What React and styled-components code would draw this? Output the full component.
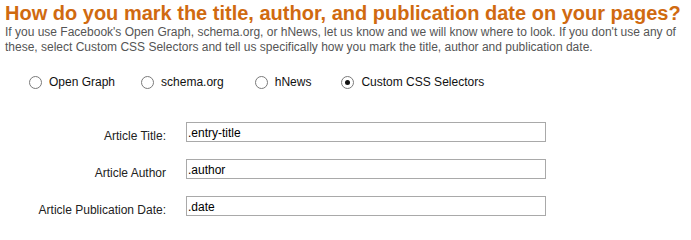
import React from "react";
import styled, { createGlobalStyle } from "styled-components";

const Global = createGlobalStyle`
  html, body { margin: 0; padding: 0; background: #fff; }
  body { font-family: "Liberation Sans", Arial, sans-serif; }
`;

const Page = styled.div`
  padding: 2px 5px 0 5px;
`;

const Title = styled.h1`
  margin: 0;
  font-size: 20px;
  line-height: 22px;
  font-weight: bold;
  color: #d06a10;
`;

const Desc = styled.p`
  margin: 1px 0 0 0;
  font-size: 12px;
  line-height: 15px;
  color: #555;
`;

const RadioRow = styled.div`
  display: flex;
  align-items: center;
  height: 20px;
  margin-top: 17px;
  padding-left: 24px;
`;

const RadioItem = styled.label`
  display: flex;
  align-items: center;
  gap: 7px;
  margin-right: ${(p) => p.$space}px;
  font-size: 12px;
  color: #111;
`;

const Circle = styled.span`
  box-sizing: border-box;
  width: 13px;
  height: 13px;
  border-radius: 50%;
  border: 1px solid #7a7a7a;
  background: #fff;
  display: flex;
  align-items: center;
  justify-content: center;
  &::after {
    content: "";
    width: 5px;
    height: 5px;
    border-radius: 50%;
    background: ${(p) => (p.$checked ? "#111" : "transparent")};
  }
`;

const Form = styled.div`
  display: grid;
  grid-template-columns: 161px 360px;
  grid-auto-rows: 20px;
  column-gap: 20px;
  row-gap: 17px;
  margin-top: 30px;
`;

const FieldLabel = styled.label`
  text-align: right;
  font-size: 12px;
  line-height: 15px;
  padding-top: 7px;
  color: #222;
`;

const TextInput = styled.input`
  box-sizing: border-box;
  width: 360px;
  height: 20px;
  margin: 0;
  padding: 1px 1px 0 1px;
  border: 1px solid #a9a9a9;
  font-family: "Liberation Sans", Arial, sans-serif;
  font-size: 12px;
  color: #000;
  outline: none;
`;

const options = [
  { label: "Open Graph", checked: false, space: 26 },
  { label: "schema.org", checked: false, space: 31 },
  { label: "hNews", checked: false, space: 30 },
  { label: "Custom CSS Selectors", checked: true, space: 0 },
];

const fields = [
  { label: "Article Title:", value: ".entry-title" },
  { label: "Article Author", value: ".author" },
  { label: "Article Publication Date:", value: ".date" },
];

export default function App() {
  return (
    <Page>
      <Global />
      <Title>How do you mark the title, author, and publication date on your pages?</Title>
      <Desc>
        If you use Facebook's Open Graph, schema.org, or hNews, let us know and we will know where to look. If you don't use any of
        these, select Custom CSS Selectors and tell us specifically how you mark the title, author and publication date.
      </Desc>
      <RadioRow>
        {options.map((o) => (
          <RadioItem key={o.label} $space={o.space}>
            <Circle $checked={o.checked} />
            {o.label}
          </RadioItem>
        ))}
      </RadioRow>
      <Form>
        {fields.map((f) => (
          <React.Fragment key={f.label}>
            <FieldLabel>{f.label}</FieldLabel>
            <TextInput defaultValue={f.value} />
          </React.Fragment>
        ))}
      </Form>
    </Page>
  );
}
